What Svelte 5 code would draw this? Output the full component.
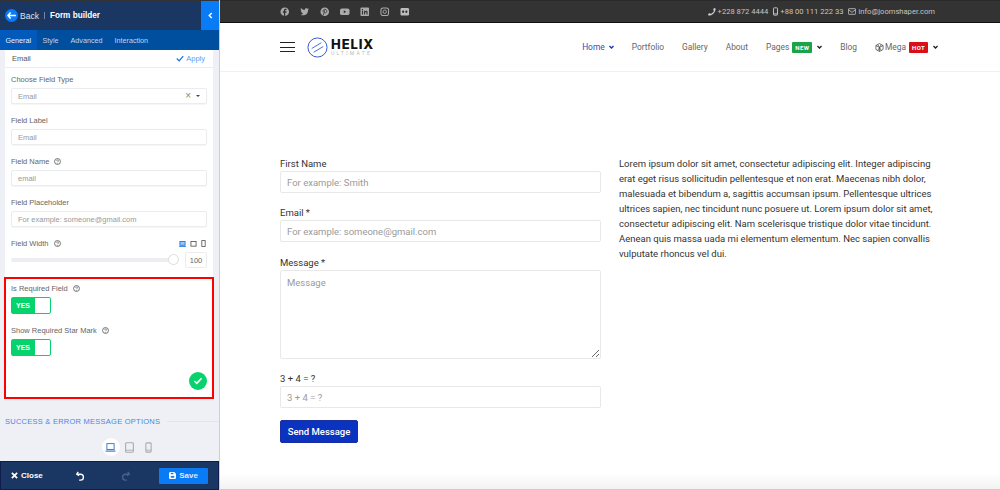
<script>
  const nav = [
    { label: 'Portfolio' },
    { label: 'Gallery' },
    { label: 'About' }
  ];
  const lorem = 'Lorem ipsum dolor sit amet, consectetur adipiscing elit. Integer adipiscing erat eget risus sollicitudin pellentesque et non erat. Maecenas nibh dolor, malesuada et bibendum a, sagittis accumsan ipsum. Pellentesque ultrices ultrices sapien, nec tincidunt nunc posuere ut. Lorem ipsum dolor sit amet, consectetur adipiscing elit. Nam scelerisque tristique dolor vitae tincidunt. Aenean quis massa uada mi elementum elementum. Nec sapien convallis vulputate rhoncus vel dui.';
</script>

{#snippet help()}
  <svg class="help" viewBox="0 0 10 10"><circle cx="5" cy="5" r="4.2" fill="none" stroke="#666" stroke-width="1.3"/><path d="M3.7 4c0-1.7 2.7-1.7 2.7 0 0 1-1.4 1-1.4 2" fill="none" stroke="#666" stroke-width="1.1"/><circle cx="5" cy="7.5" r=".7" fill="#666"/></svg>
{/snippet}

{#snippet chev(color)}
  <svg class="chev" viewBox="0.3 0.3 7.4 4.6"><path d="M1 1l3 3 3-3" fill="none" stroke={color} stroke-width="2"/></svg>
{/snippet}

{#snippet toggle()}
  <div class="toggle"><span class="yes">YES</span><span class="knob"></span></div>
{/snippet}

<div class="page">
  <aside class="side">
    <header class="head">
      <span class="backdot"><svg viewBox="0 0 10 8" width="9" height="7"><path d="M4 .5L1 4l3 3.500M1 4h9" fill="none" stroke="#fff" stroke-width="1.800"/></svg></span>
      <span class="back">Back</span>
      <span class="sep"></span>
      <strong class="title">Form builder</strong>
      <span class="collapse"><svg viewBox="0 0 6 8" width="5" height="7"><path d="M4.500 1L1.500 4l3 3" fill="none" stroke="#fff" stroke-width="1.800"/></svg></span>
    </header>
    <nav class="tabs">
      <span class="tab active">General</span>
      <span class="tab">Style</span>
      <span class="tab">Advanced</span>
      <span class="tab">Interaction</span>
    </nav>
    <div class="scroll">
      <section class="card">
        <div class="cardhead">
          <span class="cardname">Email</span>
          <span class="apply"><svg viewBox="0 0 10 8" width="8" height="7"><path d="M1 4l3 3 5-6" fill="none" stroke="#1277e0" stroke-width="1.600"/></svg> Apply</span>
        </div>
        <div class="fields">
          <div class="field first">
            <div class="flabel">Choose Field Type</div>
            <div class="finput select"><span>Email</span><span class="selicons"><span class="x">×</span><span class="caret"></span></span></div>
          </div>
          <div class="field">
            <div class="flabel">Field Label</div>
            <div class="finput">Email</div>
          </div>
          <div class="field">
            <div class="flabel">Field Name {@render help()}</div>
            <div class="finput">email</div>
          </div>
          <div class="field">
            <div class="flabel">Field Placeholder</div>
            <div class="finput">For example: someone@gmail.com</div>
          </div>
          <div class="field">
            <div class="flabel between">
              <span>Field Width {@render help()}</span>
              <span class="devs">
                <svg viewBox="0 0 8 7" width="7" height="6"><rect x="1" y=".5" width="6" height="4.500" fill="#9cc6f5" stroke="#1277e0"/><path d="M0 6.500h8" stroke="#1277e0"/></svg>
                <svg viewBox="0 0 8 7" width="7" height="6"><rect x="1" y=".5" width="6" height="5.500" fill="none" stroke="#555"/></svg>
                <svg viewBox="0 0 6 8" width="5" height="7"><rect x="1" y=".5" width="4" height="7" fill="none" stroke="#555"/></svg>
              </span>
            </div>
            <div class="sliderrow">
              <div class="track"><span class="thumb"></span></div>
              <div class="num">100</div>
            </div>
          </div>
          <div class="field req">
            <div class="flabel">Is Required Field {@render help()}</div>
            {@render toggle()}
          </div>
          <div class="field">
            <div class="flabel">Show Required Star Mark {@render help()}</div>
            {@render toggle()}
          </div>
        </div>
        <div class="done"><svg viewBox="0 0 12 10" width="10" height="8"><path d="M1.500 5l3 3 6-6.500" fill="none" stroke="#fff" stroke-width="2"/></svg></div>
      </section>
      <div class="redbox"></div>
      <div class="group"><span>SUCCESS &amp; ERROR MESSAGE OPTIONS</span><i></i></div>
      <div class="devices">
        <span class="devon"><svg viewBox="0 0 12 10" width="11" height="9"><rect x="2" y=".7" width="8" height="6.600" fill="none" stroke="#2b6ed6"/><path d="M.5 9h11" stroke="#2b6ed6" stroke-width="1.200"/></svg></span>
        <svg class="devtab" viewBox="0 0 10 12" width="9" height="11"><rect x=".7" y=".7" width="8.600" height="10.600" rx="1" fill="none" stroke="#aaa" stroke-width="1.200"/><path d="M.5 9h9" stroke="#aaa"/></svg>
        <svg class="devphone" viewBox="0 0 8 12" width="7" height="11"><rect x="1" y=".7" width="6" height="10.600" rx="1" fill="none" stroke="#aaa" stroke-width="1.200"/><path d="M1 9h6" stroke="#aaa"/></svg>
      </div>
    </div>
    <footer class="foot">
      <span class="close"><svg viewBox="0 0 8 8" width="7" height="7"><path d="M1 1l6 6M7 1L1 7" stroke="#fff" stroke-width="2"/></svg> Close</span>
      <svg class="undo" viewBox="0 0 10 11" width="9" height="10"><path d="M2.500 1L.8 3.500 3.500 5M1 3.500h4a3 3 0 0 1 0 6.500H3.500" fill="none" stroke="#fff" stroke-width="1.500"/></svg>
      <svg class="redo" viewBox="0 0 10 11" width="9" height="10"><path d="M7.500 1l1.700 2.500L6.500 5M9 3.500H5a3 3 0 0 0 0 6.500h1.500" fill="none" stroke="#4a6285" stroke-width="1.500"/></svg>
      <span class="save"><svg viewBox="0 0 8 8" width="7" height="7"><path d="M0 1l1-1h5l2 2v5l-1 1H1L0 7z" fill="#fff"/><rect x="2" y="4.500" width="4" height="2" fill="#087bf5"/><rect x="2" y="1" width="3" height="1.500" fill="#087bf5"/></svg> Save</span>
    </footer>
  </aside>

  <main class="site">
    <div class="topbar">
      <div class="social">
        <svg viewBox="0 0 10 10"><circle cx="5" cy="5" r="4.500" fill="#aaa"/><path d="M5.500 10V6h1.200l.2-1.400H5.500v-.8c0-.5.200-.7.800-.7h.6V1.900H5.900C4.700 1.900 4.100 2.600 4.100 3.700v.9H3V6h1.100v4z" fill="#333"/></svg>
        <svg viewBox="0 0 10 10"><path d="M.5 8.200c2.500 1.300 8 .8 8-5l1-1-1.200.2.700-1-1.200.4C6.700.700 4.900 1.400 5 3.100 3.500 3 2 2.200 1 1c-.5 1-.3 2 .5 2.800L.8 3.600c0 1 .6 1.700 1.500 2l-.7.100c.3.800.9 1.200 1.800 1.300-.7.700-1.700 1.100-2.900 1.200z" fill="#aaa"/></svg>
        <svg viewBox="0 0 10 10"><circle cx="5" cy="5" r="4.500" fill="#aaa"/><path d="M3.500 8.500L5 3.500M3.400 5.200C2.600 3.500 4 2.300 5.300 2.400c2 .1 2.200 2.100 1.400 3.300-.6.800-1.600.7-1.900 0" fill="none" stroke="#333" stroke-width=".9"/></svg>
        <svg viewBox="0 0 10 10"><rect x="0" y="1.500" width="10" height="7" rx="2" fill="#aaa"/><path d="M4 3.500L6.500 5 4 6.500z" fill="#333"/></svg>
        <svg viewBox="0 0 10 10"><rect x=".5" y=".5" width="9" height="9" rx="1" fill="#aaa"/><path d="M2 4h1.200v4H2zM2 2.200h1.200v1.100H2zM4.200 4h1.100v.6C5.800 3.800 8 3.700 8 5.700V8H6.800V6c0-1.200-1.400-1.100-1.400 0v2H4.200z" fill="#333"/></svg>
        <svg viewBox="0 0 10 10"><rect x="1" y="1" width="8" height="8" rx="2.200" fill="none" stroke="#aaa" stroke-width="1.100"/><circle cx="5" cy="5" r="1.800" fill="none" stroke="#aaa" stroke-width="1"/></svg>
        <svg viewBox="0 0 10 10"><rect x=".5" y="1" width="9" height="8" rx="1.300" fill="#bbb"/><circle cx="3.300" cy="5" r="1.200" fill="#333"/><circle cx="6.700" cy="5" r="1.200" fill="#333"/></svg>
      </div>
      <div class="contact">
        <span><svg viewBox="0 0 10 10" width="8" height="8"><path d="M9.500.5L7.500 0 6.300 2.500l1.200 1C7 5 5.500 6.700 3.500 7.500l-1-1.200L0 7.500.5 9.500c5 0 9-4 9-9z" fill="#ccc"/></svg> +228 872 4444</span>
        <span><svg viewBox="0 0 6 10" width="5" height="9"><rect x=".6" y=".6" width="4.800" height="8.800" rx=".8" fill="none" stroke="#ccc" stroke-width="1.100"/><path d="M.6 7.800h4.800" stroke="#ccc"/></svg> +88 00 111 222 33</span>
        <span><svg viewBox="0 0 10 8" width="8" height="7"><rect x=".5" y=".5" width="9" height="7" rx=".8" fill="none" stroke="#ccc"/><path d="M.5 1.800L5 5l4.500-3.200" fill="none" stroke="#ccc"/></svg> info@joomshaper.com</span>
      </div>
    </div>

    <header class="navbar">
      <div class="brand">
        <div class="burger"><i></i><i></i><i></i></div>
        <svg class="logo" viewBox="0 0 22 22" width="21" height="21"><circle cx="11" cy="11" r="10" fill="none" stroke="#2c56c9" stroke-width="1"/><path d="M5 12L15 6M7 16l10-6" stroke="#2c56c9" stroke-width=".9"/></svg>
        <div class="word"><b>HELIX</b><small>ULTIMATE</small></div>
      </div>
      <nav class="menu">
        <span class="item home">Home {@render chev('#1a37b5')}</span>
        {#each nav as n}
          <span class="item">{n.label}</span>
        {/each}
        <span class="item">Pages <em class="badge new">NEW</em>{@render chev('#222')}</span>
        <span class="item">Blog</span>
        <span class="item mega">
          <svg class="cube" viewBox="0 0 10 10" width="9" height="9"><path d="M5 .6L9 2.800v4.400L5 9.400 1 7.200V2.800zM1 2.800L5 5l4-2.200M5 5v4.400M3 1.700L7 8.300M7 1.700L3 8.300" fill="none" stroke="#444" stroke-width=".8"/></svg>
          Mega <em class="badge hot">HOT</em>{@render chev('#222')}
        </span>
      </nav>
    </header>

    <section class="content">
      <form class="form" onsubmit={(e) => e.preventDefault()}>
        <div class="row"><label for="fn">First Name</label><input id="fn" placeholder="For example: Smith" /></div>
        <div class="row"><label for="em">Email *</label><input id="em" placeholder="For example: someone@gmail.com" /></div>
        <div class="row"><label for="ms">Message *</label><textarea id="ms" placeholder="Message"></textarea></div>
        <div class="row"><label for="cp">3 + 4 = ?</label><input id="cp" placeholder="3 + 4 = ?" /></div>
        <button type="submit">Send Message</button>
      </form>
      <p class="lorem">{lorem}</p>
    </section>
    <div class="fade"></div>
  </main>
</div>

<style>
  :global(body) { margin: 0; background: #fff; }
  .page { display: flex; width: 1000px; height: 490px; overflow: hidden; font-family: Roboto, sans-serif; }

  .side { position: relative; width: 219px; flex: none; height: 490px; display: flex; flex-direction: column; background: #eef0f5; font-family: "Liberation Sans", Arial, sans-serif; border-right: 1px solid #ccd; box-sizing: content-box; }
  .head { height: 29px; margin-top: 1px; background: #1a3663; display: flex; align-items: center; color: #fff; font-size: 8.500px; padding-left: 5px; box-shadow: 0 -1px 0 #333; }
  .backdot { width: 13px; height: 13px; border-radius: 50%; background: #087bf5; display: flex; align-items: center; justify-content: center; margin-right: 2px; }
  .back { color: #dde4ee; }
  .sep { width: 1px; height: 7px; background: #7187a8; margin: 0 5px; }
  .title { font-size: 8.200px; }
  .collapse { margin-left: auto; width: 18px; align-self: stretch; background: #087bf5; display: flex; align-items: center; justify-content: center; }
  .tabs { height: 20px; background: #004f9f; display: flex; align-items: stretch; font-size: 7.200px; color: #c2d4ea; }
  .tab { padding: 0 6px; display: flex; align-items: center; }
  .tab.active { position: relative; background: #0059bb; color: #e9f1fb; padding: 0 5.500px; }
  .tab.active::after { content: ""; position: absolute; left: 14px; bottom: -3px; border: 3px solid transparent; border-bottom: 0; border-top-color: #0059bb; }
  .scroll { position: relative; flex: 1; min-height: 0; padding: 0 6px 0 5px; }
  .card { background: #fff; height: 348px; display: flex; flex-direction: column; position: relative; }
  .cardhead { height: 17px; display: flex; justify-content: space-between; align-items: center; padding: 0 8px 0 7px; border-bottom: 1px solid #ececf0; font-size: 7.500px; color: #555; flex: none; }
  .cardname { font-weight: 500; }
  .apply { color: #5b9df0; display: flex; align-items: center; gap: 2px; }
  .fields { padding: 0 6px; }
  .field { margin-top: 10px; }
  .field.first { margin-top: 5px; }
  .field.req { margin-top: 14px; }
  .flabel { font-size: 7.500px; color: #666; height: 9px; line-height: 9px; margin-bottom: 4px; padding-top: 2px; }
  .between { display: flex; justify-content: space-between; align-items: center; }
  .devs { display: flex; gap: 4px; padding-right: 1px; align-items: center; }
  .help { width: 7px; height: 7px; vertical-align: -1px; margin-left: 3px; }
  .finput { height: 16px; box-sizing: border-box; border: 1px solid #eaecef; border-radius: 2px; box-shadow: 0 1px 1px rgba(0,0,0,.04); padding: 0 6px; font-size: 7.500px; color: #999; display: flex; align-items: center; background: #fff; }
  .select { justify-content: space-between; }
  .selicons { display: flex; align-items: center; gap: 5px; }
  .x { font-size: 10px; color: #888; line-height: 1; }
  .caret { border: 2.500px solid transparent; border-top-color: #444; border-bottom: 0; }
  .sliderrow { display: flex; align-items: center; gap: 6px; margin-top: 4px; }
  .track { position: relative; flex: 1; height: 4px; border-radius: 2px; background: #eceef1; }
  .thumb { position: absolute; right: 0; top: -4px; width: 11px; height: 11px; box-sizing: border-box; border-radius: 50%; background: #fff; border: 1px solid #ddd; }
  .num { width: 22px; height: 16px; box-sizing: border-box; border: 1px solid #eaecef; border-radius: 2px; font-size: 7.500px; color: #666; display: flex; align-items: center; justify-content: center; }
  .toggle { width: 40px; height: 17px; box-sizing: border-box; border: 1px solid #07d36c; border-radius: 2px; display: flex; background: #fff; margin-top: 2px; }
  .yes { width: 23px; background: #07d36c; color: #fff; font-size: 7px; font-weight: bold; display: flex; align-items: center; padding-left: 4px; box-sizing: border-box; }
  .knob { flex: 1; }
  .done { position: absolute; right: 6px; bottom: 8px; width: 18px; height: 18px; border-radius: 50%; background: #07d36c; display: flex; align-items: center; justify-content: center; }
  .redbox { position: absolute; left: 4px; top: 227px; width: 210px; height: 122px; box-sizing: border-box; border: 2px solid #f00; pointer-events: none; }
  .group { display: flex; align-items: center; gap: 7px; margin-top: 17px; height: 12px; font-size: 7.500px; letter-spacing: .25px; color: #4a86e8; white-space: nowrap; margin-right: -6px; }
  .group i { flex: 1; height: 1px; background: #e2e5ea; }
  .devices { display: flex; align-items: center; justify-content: center; margin-top: 11px; padding-left: 35px; }
  .devtab { margin-left: 5px; }
  .devphone { margin-left: 11px; }
  .devon { width: 18px; height: 18px; background: #fff; border-radius: 50%; display: flex; align-items: center; justify-content: center; }
  .foot { height: 29px; box-sizing: border-box; background: #1a3663; border: 1px solid #101c4d; display: flex; align-items: center; padding: 0 10px; color: #fff; font-size: 8px; font-weight: bold; }
  .close { display: flex; align-items: center; gap: 3px; width: 65px; }
  .redo { margin-left: 36px; }
  .save { margin-left: auto; width: 49px; height: 16px; background: #087bf5; border-radius: 1px; display: flex; align-items: center; justify-content: center; gap: 3px; color: #dceaff; }

  .site { position: relative; flex: 1; min-width: 0; display: flex; flex-direction: column; }
  .topbar { height: 23px; box-sizing: border-box; background: #333; border-top: 1px solid #2a2a2a; border-bottom: 1px solid #111; display: flex; justify-content: space-between; align-items: center; padding: 0 65px 0 60px; color: #c5c5c5; font-size: 7.600px; }
  .social { display: flex; gap: 10.500px; }
  .social svg { width: 9.500px; height: 9.500px; }
  .contact { display: flex; gap: 5px; }
  .contact span { display: flex; align-items: center; gap: 2px; }
  .navbar { height: 49px; box-sizing: border-box; border-bottom: 1px solid #f0f0f0; display: flex; align-items: center; justify-content: space-between; padding: 0 62px 0 60px; }
  .brand { display: flex; align-items: center; }
  .burger { width: 15px; display: flex; flex-direction: column; gap: 3.500px; margin-right: 12px; }
  .burger i { height: 1px; background: #222; display: block; }
  .logo { margin-right: 3px; }
  .word { display: flex; flex-direction: column; line-height: 1; }
  .word b { font: 800 13px/12px Inter, Roboto, sans-serif; letter-spacing: .9px; color: #111; }
  .word small { font-size: 5px; letter-spacing: 2.300px; color: #bbb; line-height: 6px; }
  .menu { display: flex; align-items: center; gap: 18px; font-size: 8.400px; color: #666; }
  .item { display: flex; align-items: center; gap: 3px; white-space: nowrap; }
  .home { color: #3050bd; gap: 2px; }
  .mega { gap: 1px; }
  .mega .badge { margin-left: 2px; }
  .mega .chev { margin-left: 4px; }
  .chev { width: 5px; height: 4px; margin-left: 2px; }
  .badge { font: bold 6px/11px Roboto, sans-serif; letter-spacing: .4px; color: #fff; padding: 0 3px; border-radius: 1px; height: 11px; display: inline-block; text-align: center; }
  .new { background: #1aa34a; width: 14px; }
  .hot { background: #d80f16; width: 13px; }
  .content { flex: 1; min-height: 0; display: flex; gap: 18px; padding: 85px 65px 0 60px; }
  .form { width: 321px; flex: none; display: flex; flex-direction: column; align-items: flex-start; }
  .row { width: 100%; margin-bottom: 13.400px; }
  label { display: block; font-size: 9.500px; line-height: 14px; color: #333; }
  input, textarea { display: block; width: 100%; box-sizing: border-box; border: 1px solid #e8e8e8; border-radius: 2px; padding: 0 6px; font: 9.500px Roboto, sans-serif; color: #333; background: #fff; outline: none; }
  input { height: 22px; }
  textarea { height: 89px; padding: 6px; }
  input::placeholder, textarea::placeholder { color: #9a9a9a; opacity: 1; }
  .form button { margin-top: -1.400px; width: 78px; height: 23px; background: #0a34c0; border: 1px solid #1a2fa0; border-radius: 2px; color: #fff; font: 500 9.500px Roboto, sans-serif; padding: 0; }
  .lorem { margin: -1px 0 0; flex: 1; font-size: 9.500px; line-height: 15px; color: #333; }
  .fade { position: absolute; left: 0; right: 0; bottom: 0; height: 16px; background: linear-gradient(to bottom, rgba(240,240,240,0), #f2f2f2); border-bottom: 1px solid #ccc; }
</style>
